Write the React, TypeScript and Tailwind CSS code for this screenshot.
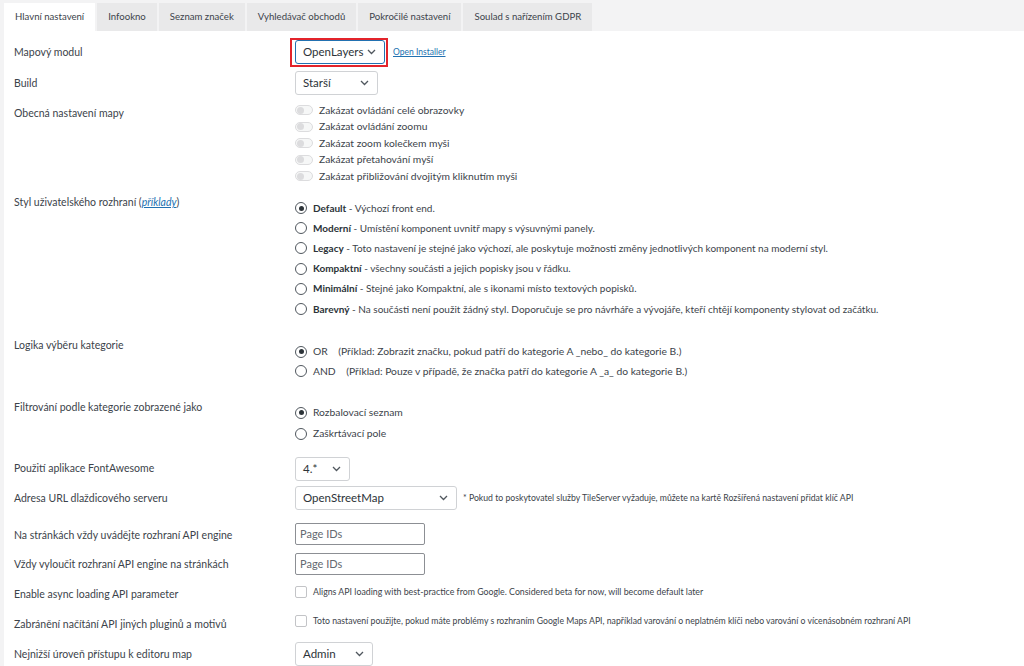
import React from 'react'

const tabs = [
  { label: 'Hlavní nastavení', active: true },
  { label: 'Infookno' },
  { label: 'Seznam značek' },
  { label: 'Vyhledávač obchodů' },
  { label: 'Pokročilé nastavení' },
  { label: 'Soulad s nařízením GDPR' },
]

const toggles = [
  'Zakázat ovládání celé obrazovky',
  'Zakázat ovládání zoomu',
  'Zakázat zoom kolečkem myši',
  'Zakázat přetahování myší',
  'Zakázat přibližování dvojitým kliknutím myši',
]

const styles = [
  { name: 'Default', desc: 'Výchozí front end.', checked: true },
  { name: 'Moderní', desc: 'Umístění komponent uvnitř mapy s výsuvnými panely.' },
  { name: 'Legacy', desc: 'Toto nastavení je stejné jako výchozí, ale poskytuje možnosti změny jednotlivých komponent na moderní styl.' },
  { name: 'Kompaktní', desc: 'všechny součásti a jejich popisky jsou v řádku.' },
  { name: 'Minimální', desc: 'Stejné jako Kompaktní, ale s ikonami místo textových popisků.' },
  { name: 'Barevný', desc: 'Na součásti není použit žádný styl. Doporučuje se pro návrháře a vývojáře, kteří chtějí komponenty stylovat od začátku.' },
]

function Chevron() {
  return (
    <svg width="9" height="6" viewBox="0 0 9 6" fill="none" className="shrink-0">
      <path d="M1 1l3.5 3.5L8 1" stroke="#50575e" strokeWidth="1.3" />
    </svg>
  )
}

function Select({ value, w, focused }: { value: string; w: string; focused?: boolean }) {
  return (
    <div
      className={`${w} h-[24px] flex items-center justify-between pl-[7px] pr-[8px] bg-white rounded-[3px] border text-[11.5px] text-[#2c3338] ${
        focused ? 'border-[#2271b1]' : 'border-[#d0d2d5]'
      }`}
    >
      <span>{value}</span>
      <Chevron />
    </div>
  )
}

function Radio({ checked }: { checked?: boolean }) {
  return (
    <span className="w-[12px] h-[12px] rounded-full border border-[#50575e] bg-white flex items-center justify-center shrink-0">
      {checked && <span className="w-[5px] h-[5px] rounded-full bg-[#2c3338]" />}
    </span>
  )
}

function Toggle() {
  return (
    <span className="w-[18px] h-[10px] rounded-full border border-[#dcdcde] bg-[#f6f7f7] flex items-center pl-[1px] shrink-0">
      <span className="w-[7px] h-[7px] rounded-full bg-[#dcdcde]" />
    </span>
  )
}

function Checkbox() {
  return <span className="w-[12px] h-[12px] rounded-[2px] border border-[#c3c4c7] bg-white shrink-0" />
}

function PageIds() {
  return (
    <div className="w-[130px] h-[22px] border border-[#8c8f94] rounded-[2px] bg-white flex items-center pl-[4px] text-[11px] text-[#646970]">
      Page IDs
    </div>
  )
}

function Row({
  label,
  h,
  lpt,
  cpt,
  children,
}: {
  label: React.ReactNode
  h: string
  lpt: string
  cpt: string
  children: React.ReactNode
}) {
  return (
    <div className={`flex ${h}`}>
      <div className={`w-[291px] shrink-0 pl-[10px] ${lpt} text-[10.5px] leading-[16px] text-[#3c434a]`}>{label}</div>
      <div className={`flex-1 ${cpt}`}>{children}</div>
    </div>
  )
}

export default function App() {
  return (
    <div className="w-[1024px] h-[666px] overflow-hidden bg-[#f3f3f4] pl-[4px] pt-[3px] font-['Lato','Open_Sans',sans-serif]">
      <div className="flex gap-[2px] h-[28px]">
        {tabs.map((t) => (
          <div
            key={t.label}
            className={`px-[11px] whitespace-nowrap flex items-center justify-center text-[9.6px] text-[#3c434a] ${
              t.active ? 'bg-white' : 'bg-[#e9e9ea]'
            }`}
          >
            {t.label}
          </div>
        ))}
      </div>

      <div className="bg-white h-full pt-[5px]">
        <Row label="Mapový modul" h="h-[32px]" lpt="pt-[8px]" cpt="pt-[2px]">
          <div className="flex items-center">
            <div className="-ml-[5px] border-2 border-[#e3242b] pl-[3px] pr-[1px] pb-[1px]">
              <Select value="OpenLayers" w="w-[90px]" focused />
            </div>
            <a className="ml-[5px] text-[8.5px] text-[#2271b1] underline">Open Installer</a>
          </div>
        </Row>

        <Row label="Build" h="h-[30px]" lpt="pt-[7px]" cpt="pt-[3px]">
          <Select value="Starší" w="w-[83px]" />
        </Row>

        <Row label="Obecná nastavení mapy" h="h-[92px]" lpt="pt-[7px]" cpt="pt-[4px]">
          <div className="flex flex-col">
            {toggles.map((t) => (
              <div key={t} className="flex items-center gap-[6px] h-[16.5px] text-[10.3px] text-[#3c434a]">
                <Toggle />
                <span>{t}</span>
              </div>
            ))}
          </div>
        </Row>

        <Row
          label={
            <>
              Styl uživatelského rozhraní (
              <a className="italic underline text-[#2271b1]">příklady</a>)
            </>
          }
          h="h-[140px]"
          lpt="pt-[4px]"
          cpt="pt-[8px]"
        >
          <div className="flex flex-col">
            {styles.map((s) => (
              <div key={s.name} className="flex items-center gap-[6px] h-[20.2px] text-[10px] text-[#3c434a]">
                <Radio checked={s.checked} />
                <span>
                  <b className="font-bold text-[#2c3338]">{s.name}</b> - {s.desc}
                </span>
              </div>
            ))}
          </div>
        </Row>

        <Row label="Logika výběru kategorie" h="h-[62px]" lpt="pt-[7px]" cpt="pt-[12px]">
          <div className="flex flex-col">
            <div className="flex items-center gap-[6px] h-[19.5px] text-[10.3px] text-[#3c434a]">
              <Radio checked />
              <span>
                OR&nbsp;&nbsp;&nbsp; (Příklad: Zobrazit značku, pokud patří do kategorie A _nebo_ do kategorie B.)
              </span>
            </div>
            <div className="flex items-center gap-[6px] h-[19.5px] text-[10.3px] text-[#3c434a]">
              <Radio />
              <span>
                AND&nbsp;&nbsp;&nbsp; (Příklad: Pouze v případě, že značka patří do kategorie A _a_ do kategorie B.)
              </span>
            </div>
          </div>
        </Row>

        <Row label="Filtrování podle kategorie zobrazené jako" h="h-[60px]" lpt="pt-[7px]" cpt="pt-[10px]">
          <div className="flex flex-col">
            <div className="flex items-center gap-[6px] h-[21px] text-[10.3px] text-[#3c434a]">
              <Radio checked />
              <span>Rozbalovací seznam</span>
            </div>
            <div className="flex items-center gap-[6px] h-[21px] text-[10.3px] text-[#3c434a]">
              <Radio />
              <span>Zaškrtávací pole</span>
            </div>
          </div>
        </Row>

        <Row label="Použití aplikace FontAwesome" h="h-[30px]" lpt="pt-[8px]" cpt="pt-[5px]">
          <Select value="4.*" w="w-[55px]" />
        </Row>

        <Row label="Adresa URL dlaždicového serveru" h="h-[36px]" lpt="pt-[8px]" cpt="pt-[4px]">
          <div className="flex items-center">
            <Select value="OpenStreetMap" w="w-[162px]" />
            <span className="ml-[6px] text-[8.7px] text-[#3c434a]">
              * Pokud to poskytovatel služby TileServer vyžaduje, můžete na kartě Rozšířená nastavení přidat klíč API
            </span>
          </div>
        </Row>

        <Row label="Na stránkách vždy uvádějte rozhraní API engine" h="h-[30px]" lpt="pt-[9px]" cpt="pt-[5px]">
          <PageIds />
        </Row>

        <Row label="Vždy vyloučit rozhraní API engine na stránkách" h="h-[30px]" lpt="pt-[8px]" cpt="pt-[5px]">
          <PageIds />
        </Row>

        <Row label="Enable async loading API parameter" h="h-[30px]" lpt="pt-[8px]" cpt="pt-[7px]">
          <div className="flex items-center gap-[6px] text-[8.8px] text-[#3c434a]">
            <Checkbox />
            <span>Aligns API loading with best-practice from Google. Considered beta for now, will become default later</span>
          </div>
        </Row>

        <Row label="Zabránění načítání API jiných pluginů a motivů" h="h-[30px]" lpt="pt-[8px]" cpt="pt-[6px]">
          <div className="flex items-center gap-[6px] text-[8.7px] text-[#3c434a]">
            <Checkbox />
            <span className="whitespace-nowrap">
              Toto nastavení použijte, pokud máte problémy s rozhraním Google Maps API, například varování o neplatném
              klíči nebo varování o vícenásobném rozhraní API
            </span>
          </div>
        </Row>

        <Row label="Nejnižší úroveň přístupu k editoru map" h="h-[28px]" lpt="pt-[8px]" cpt="pt-[4px]">
          <Select value="Admin" w="w-[78px]" />
        </Row>
      </div>
    </div>
  )
}
